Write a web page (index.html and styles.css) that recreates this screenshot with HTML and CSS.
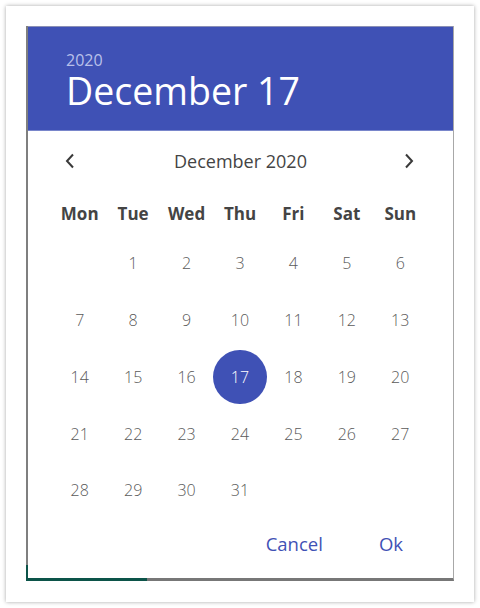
FILE: index.html
```html
<!DOCTYPE html>
<html lang="en">
<head>
<meta charset="utf-8">
<title>Date picker</title>
<link rel="stylesheet" href="styles.css">
</head>
<body>
<div class="card">
  <div class="dialog">
    <header class="head">
      <div class="year">2020</div>
      <div class="date">December 17</div>
    </header>
    <div class="nav">
      <button class="arrow" aria-label="Previous month">
        <svg width="12" height="16" viewBox="0 0 12 16"><path d="M9 1.5 L3 8 L9 14.5" fill="none" stroke="#3a3a3a" stroke-width="2"/></svg>
      </button>
      <div class="month">December 2020</div>
      <button class="arrow" aria-label="Next month">
        <svg width="12" height="16" viewBox="0 0 12 16"><path d="M3 1.5 L9 8 L3 14.5" fill="none" stroke="#3a3a3a" stroke-width="2"/></svg>
      </button>
    </div>
    <div class="grid">
      <div class="wd">Mon</div><div class="wd">Tue</div><div class="wd">Wed</div><div class="wd">Thu</div><div class="wd">Fri</div><div class="wd">Sat</div><div class="wd">Sun</div>
      <div class="day"></div><div class="day">1</div><div class="day">2</div><div class="day">3</div><div class="day">4</div><div class="day">5</div><div class="day">6</div>
      <div class="day">7</div><div class="day">8</div><div class="day">9</div><div class="day">10</div><div class="day">11</div><div class="day">12</div><div class="day">13</div>
      <div class="day">14</div><div class="day">15</div><div class="day">16</div><div class="day"><span class="sel">17</span></div><div class="day">18</div><div class="day">19</div><div class="day">20</div>
      <div class="day">21</div><div class="day">22</div><div class="day">23</div><div class="day">24</div><div class="day">25</div><div class="day">26</div><div class="day">27</div>
      <div class="day">28</div><div class="day">29</div><div class="day">30</div><div class="day">31</div><div class="day"></div><div class="day"></div><div class="day"></div>
    </div>
    <div class="actions">
      <button class="btn">Cancel</button>
      <button class="btn ok">Ok</button>
    </div>
  </div>
</div>
</body>
</html>
```
FILE: styles.css
```css
html, body {
  margin: 0;
  padding: 0;
  background: #ffffff;
}
body {
  font-family: "Open Sans", "Noto Sans", sans-serif;
}
.card {
  margin: 6px;
  width: 468px;
  height: 596px;
  box-sizing: border-box;
  padding: 20px 20px 0 20px;
  background: #fff;
  box-shadow: 0 0 4px rgba(0, 0, 0, 0.35);
}
.dialog {
  position: relative;
  width: 428px;
  height: 555px;
  box-sizing: border-box;
  border-left: 2px solid #7f7f7f;
  border-right: 1px solid #a8a8a8;
  border-bottom: 3px solid #777777;
  background: #fff;
  display: flex;
  flex-direction: column;
}
.dialog::after {
  content: "";
  position: absolute;
  left: -2px;
  bottom: -3px;
  width: 121px;
  height: 3px;
  background: #0c5449;
}
.dialog::before {
  content: "";
  position: absolute;
  left: -2px;
  bottom: 0;
  width: 2px;
  height: 13px;
  background: #0c5449;
}
.head {
  height: 105px;
  box-sizing: border-box;
  border-top: 1px solid #8a8fb5;
  border-bottom: 1px solid #7986cb;
  background: #3f51b5;
  padding: 23px 0 0 38px;
  color: #fff;
}
.year {
  font-size: 16px;
  line-height: 20px;
  color: #b9c0ea;
}
.date {
  font-size: 37.5px;
  line-height: 42px;
}
.nav {
  height: 60px;
  display: flex;
  align-items: center;
  justify-content: space-between;
  padding: 0 38px 0 36px;
}
.arrow {
  border: 0;
  background: none;
  padding: 0;
  width: 12px;
  height: 16px;
  display: flex;
}
.month {
  font-size: 18px;
  color: #444;
  margin-left: 2px;
}
.grid {
  display: grid;
  grid-template-columns: repeat(7, 53.43px);
  grid-template-rows: 44px repeat(5, 56.75px);
  padding: 0 26px 0 25px;
}
.wd {
  display: flex;
  align-items: center;
  justify-content: center;
  font-size: 17px;
  font-weight: 700;
  color: #444;
}
.day {
  display: flex;
  align-items: center;
  justify-content: center;
  font-size: 16px;
  font-weight: 300;
  color: #5a5a5a;
}
.sel {
  width: 54px;
  height: 54px;
  border-radius: 50%;
  background: #3f51b5;
  color: #fff;
  display: flex;
  align-items: center;
  justify-content: center;
}
.actions {
  height: 50px;
  display: flex;
  align-items: center;
  justify-content: flex-end;
  padding-right: 38px;
  gap: 32px;
}
.btn {
  border: 0;
  background: none;
  font-family: "Open Sans", "Noto Sans", sans-serif;
  font-size: 18.5px;
  color: #3f51b5;
  padding: 0 12px;
}
```
